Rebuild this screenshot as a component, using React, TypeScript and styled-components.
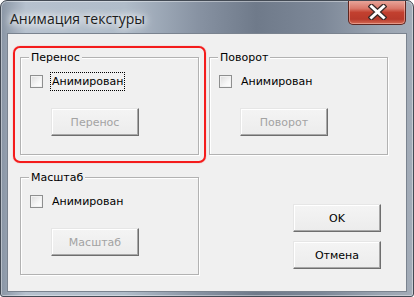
import * as React from "react";
import styled, { createGlobalStyle } from "styled-components";

const GlobalStyle = createGlobalStyle`
  html, body {
    margin: 0;
    padding: 0;
    background: #ffffff;
  }
`;

const Window = styled.div`
  box-sizing: border-box;
  width: 414px;
  height: 297px;
  display: flex;
  flex-direction: column;
  border: 1px solid #434a54;
  border-radius: 7px 7px 3px 3px;
  background: linear-gradient(
    to right,
    #8995a4 0%,
    #b6c1ce 6%,
    #b0bcc9 30%,
    #8792a2 48%,
    #6f7a8a 62%,
    #7d8898 78%,
    #9aa4b1 92%,
    #a3acb8 100%
  );
  box-shadow: inset 0 0 0 1px rgba(255, 255, 255, 0.4);
  overflow: hidden;
`;

const TitleBar = styled.div`
  height: 32px;
  display: flex;
  justify-content: space-between;
  align-items: flex-start;
  padding: 0 7px 0 9px;
`;

const Title = styled.div`
  margin-top: 8px;
  font-family: "Open Sans", "Noto Sans", sans-serif;
  font-size: 14px;
  line-height: 20px;
  color: #1b1b1b;
  text-shadow: 0 0 6px #fff, 0 0 10px #fff, 0 0 14px rgba(255, 255, 255, 0.8);
`;

const CloseButton = styled.div`
  width: 58px;
  height: 25px;
  margin-top: -1px;
  box-sizing: border-box;
  border: 1px solid #5e2620;
  border-top: none;
  border-radius: 0 0 5px 5px;
  background: linear-gradient(
    to bottom,
    #e9aa9f 0%,
    #d9786a 35%,
    #c2402f 52%,
    #b83a2b 80%,
    #d46b55 100%
  );
  box-shadow: inset 0 0 0 1px rgba(255, 210, 200, 0.45);
  display: flex;
  align-items: center;
  justify-content: center;
`;

const Client = styled.div`
  flex: 1;
  margin: 0 6px 4px 6px;
  border: 1px solid #7a838f;
  background: #f0f0f0;
  display: grid;
  grid-template-columns: 179px 179px;
  grid-template-rows: 98px 98px;
  column-gap: 10px;
  row-gap: 22px;
  padding: 23px 0 0 12px;
  font-family: "DejaVu Sans", "Liberation Sans", sans-serif;
  font-size: 11px;
  color: #000;
`;

const Group = styled.div<{ $highlight?: boolean }>`
  position: relative;
  box-sizing: border-box;
  border: 1px solid #b2b2b2;
  box-shadow: 1px 1px 0 #ffffff, inset 1px 1px 0 #ffffff;
  padding: 14px 0 0 9px;
  display: flex;
  flex-direction: column;
  align-items: flex-start;

  ${(p) =>
    p.$highlight &&
    `
    &::after {
      content: "";
      position: absolute;
      top: -12px;
      left: -8px;
      right: -8px;
      bottom: -9px;
      border: 2px solid #f41c1c;
      border-radius: 7px;
      box-shadow: 0 0 1px rgba(255, 0, 0, 0.6);
      pointer-events: none;
    }
  `}
`;

const GroupLabel = styled.span`
  position: absolute;
  top: -8px;
  left: 8px;
  padding: 0 2px;
  background: #f0f0f0;
  line-height: 15px;
`;

const CheckRow = styled.label`
  display: flex;
  align-items: center;
  height: 19px;
  gap: 7px;
`;

const CheckBox = styled.span`
  box-sizing: border-box;
  width: 13px;
  height: 13px;
  border: 1px solid #8e8f8f;
  background: linear-gradient(135deg, #dcdcdc 0%, #f6f6f6 60%, #ffffff 100%);
  box-shadow: inset 0 0 0 1px #f2f2f2;
`;

const CheckText = styled.span<{ $focused?: boolean }>`
  box-sizing: border-box;
  height: 19px;
  line-height: 17px;
  padding: 0 1px;
  border: 1px dotted ${(p) => (p.$focused ? "#000" : "transparent")};
`;

const Button = styled.button<{ $disabled?: boolean }>`
  box-sizing: border-box;
  width: 88px;
  height: 28px;
  padding: 0;
  font: inherit;
  color: ${(p) => (p.$disabled ? "#a3a3a3" : "#000")};
  background: linear-gradient(to bottom, #f4f4f4, #ececec);
  border: 1px solid;
  border-color: #e6e6e6 #6e6e6e #6e6e6e #e6e6e6;
  box-shadow: inset -1px -1px 0 #a8a8a8, inset 1px 1px 0 #ffffff;
  border-radius: 0;
`;

const GroupButton = styled(Button)`
  margin: 17px 0 0 21px;
`;

const ActionColumn = styled.div`
  display: flex;
  flex-direction: column;
  align-items: flex-end;
  gap: 9px;
  padding: 27px 7px 0 0;
`;

function CloseIcon() {
  return (
    <svg width="19" height="16" viewBox="0 0 19 16">
      <path
        d="M3.5 2.5 L15.5 13.5 M15.5 2.5 L3.5 13.5"
        stroke="#3a2a28"
        strokeWidth="5.5"
        strokeLinecap="square"
        fill="none"
      />
      <path
        d="M3.5 2.5 L15.5 13.5 M15.5 2.5 L3.5 13.5"
        stroke="#ffffff"
        strokeWidth="3"
        strokeLinecap="square"
        fill="none"
      />
    </svg>
  );
}

function AnimGroup({
  title,
  button,
  focused,
  highlight,
}: {
  title: string;
  button: string;
  focused?: boolean;
  highlight?: boolean;
}) {
  return (
    <Group $highlight={highlight}>
      <GroupLabel>{title}</GroupLabel>
      <CheckRow>
        <CheckBox />
        <CheckText $focused={focused}>Анимирован</CheckText>
      </CheckRow>
      <GroupButton $disabled disabled>
        {button}
      </GroupButton>
    </Group>
  );
}

export default function App() {
  return (
    <>
      <GlobalStyle />
      <Window>
        <TitleBar>
          <Title>Анимация текстуры</Title>
          <CloseButton>
            <CloseIcon />
          </CloseButton>
        </TitleBar>
        <Client>
          <AnimGroup title="Перенос" button="Перенос" focused highlight />
          <AnimGroup title="Поворот" button="Поворот" />
          <AnimGroup title="Масштаб" button="Масштаб" />
          <ActionColumn>
            <Button>OK</Button>
            <Button>Отмена</Button>
          </ActionColumn>
        </Client>
      </Window>
    </>
  );
}
